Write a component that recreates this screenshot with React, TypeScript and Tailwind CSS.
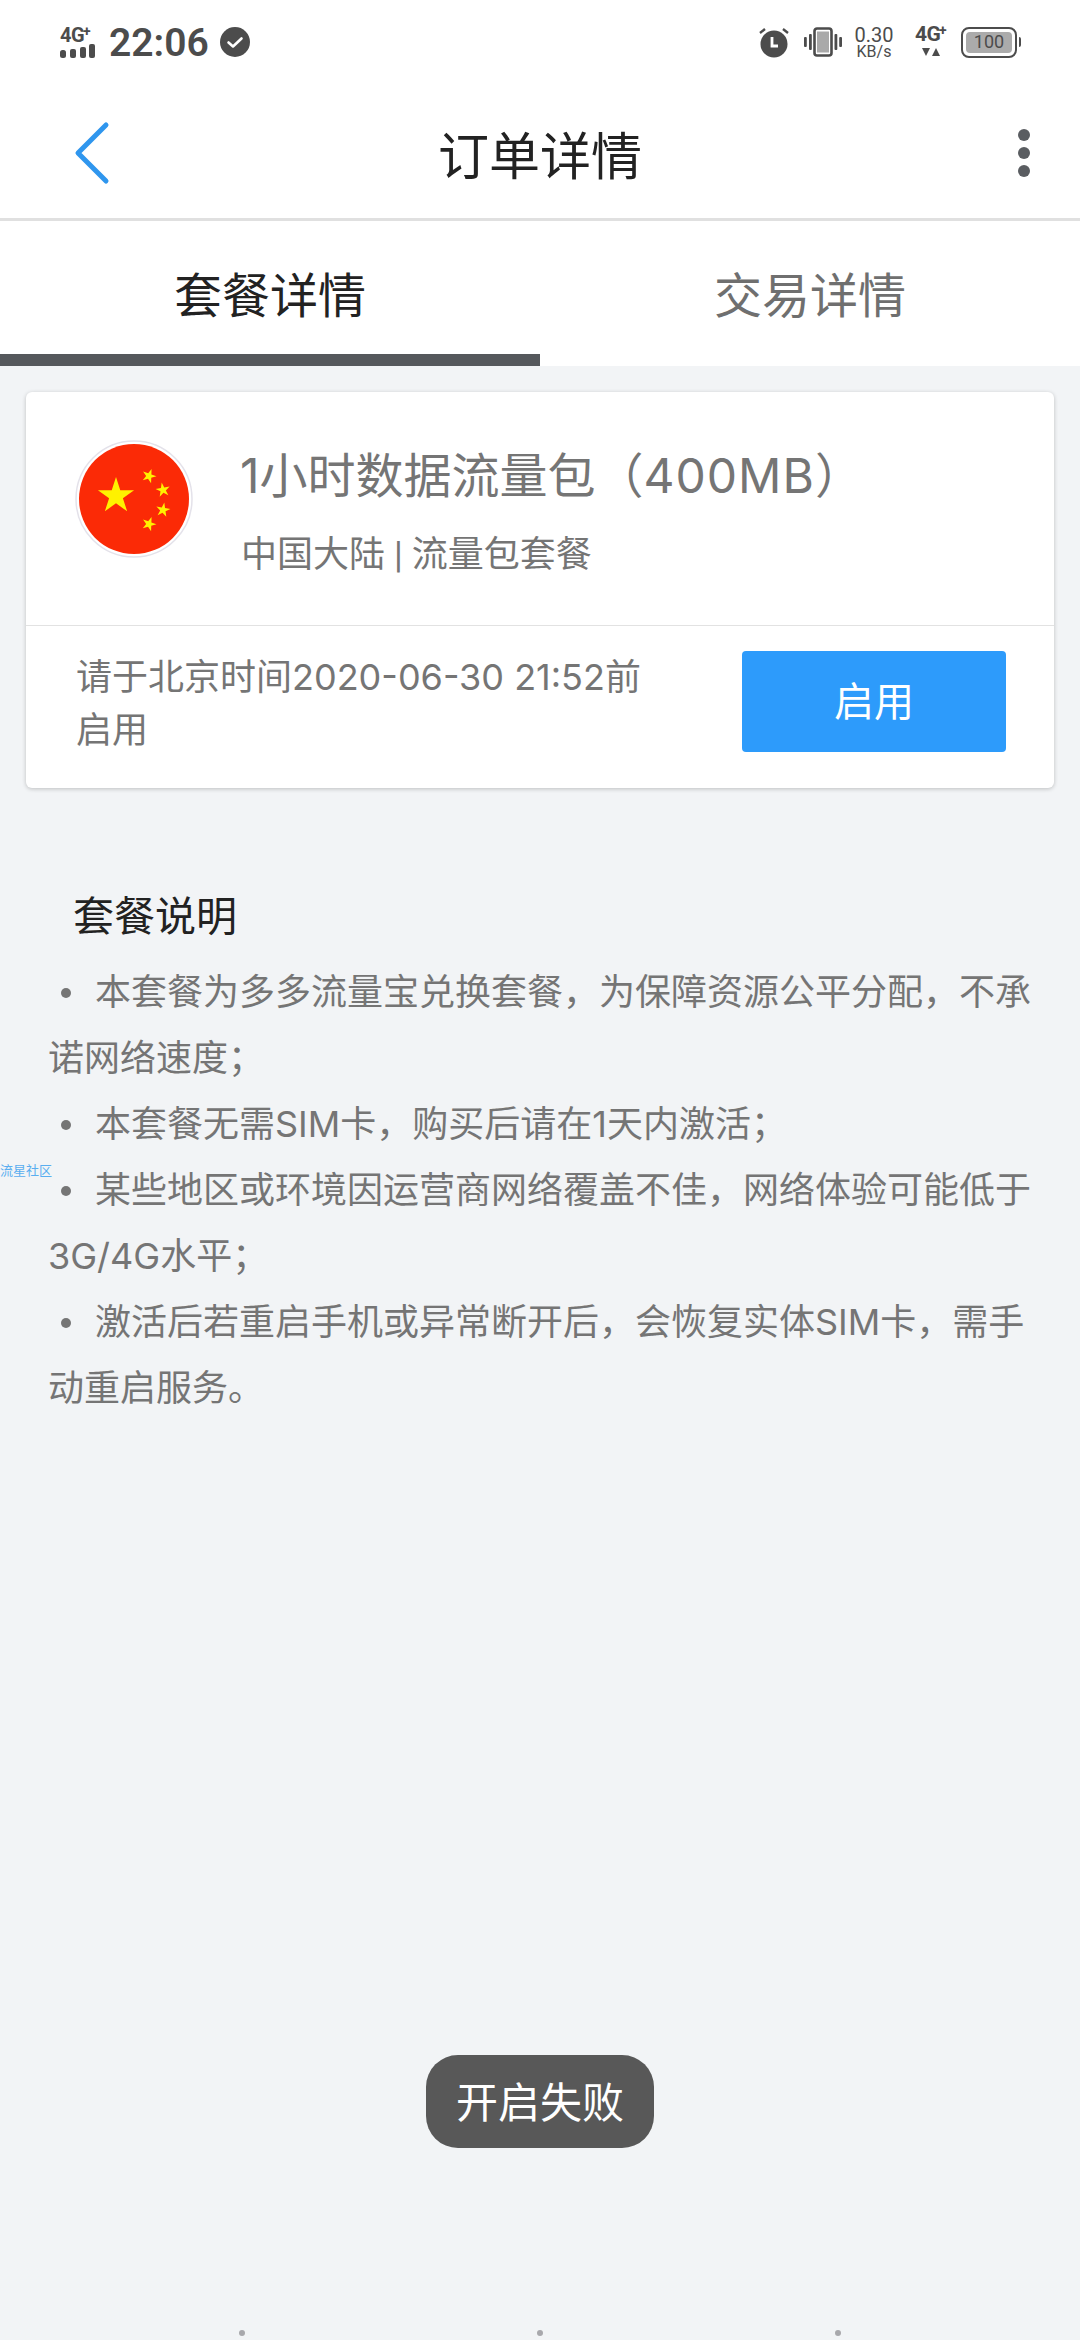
const font = { fontFamily: 'Inter, "Noto Sans CJK SC", sans-serif' };

function Star({ x, y, r, rot = 0 }: { x: number; y: number; r: number; rot?: number }) {
  const pts = Array.from({ length: 10 }, (_, i) => {
    const a = ((-90 + rot + i * 36) * Math.PI) / 180;
    const d = i % 2 === 0 ? r : r * 0.382;
    return `${x + d * Math.cos(a)},${y + d * Math.sin(a)}`;
  }).join(" ");
  return <polygon points={pts} fill="#fff200" />;
}

function Flag() {
  return (
    <svg width="118" height="118" viewBox="0 0 118 118" className="shrink-0">
      <circle cx="59" cy="59" r="58" fill="#fff" stroke="#e4e2ea" strokeWidth="1.5" />
      <circle cx="59" cy="59" r="55" fill="#fb2a06" />
      <Star x={41} y={56} r={19} />
      <Star x={74} y={36} r={7.5} rot={20} />
      <Star x={88} y={50} r={7.5} rot={-10} />
      <Star x={88} y={70} r={7.5} rot={10} />
      <Star x={74} y={84} r={7.5} rot={20} />
    </svg>
  );
}

function StatusBar() {
  return (
    <div className="h-[80px] flex items-start pt-[25px] pl-[60px] pr-[59px] justify-between text-[#4c4c4c]">
      <div className="flex items-center h-[34px]">
        <div className="relative w-[36px] h-[31px] mr-[13px]">
          <span className="absolute left-0 top-[-1px] text-[20px] leading-[18px] font-bold tracking-[-0.5px] font-['Roboto']">4G</span>
          <span className="absolute left-[23px] top-[-3px] text-[14px] leading-[14px] font-bold font-['Roboto']">+</span>
          <svg width="36" height="14" viewBox="0 0 36 14" className="absolute left-0 bottom-0">
            <rect x="0" y="6" width="6" height="8" rx="2.5" fill="#4c4c4c" />
            <rect x="10" y="5" width="6" height="9" rx="2" fill="#4c4c4c" />
            <rect x="20" y="3" width="6" height="11" rx="2" fill="#4c4c4c" />
            <rect x="29" y="0" width="6" height="14" rx="2" fill="#4c4c4c" />
          </svg>
        </div>
        <span className="text-[39px] leading-[34px] font-semibold w-[111px] mt-[2px] font-['Roboto']">22:06</span>
        <svg width="30" height="30" viewBox="0 0 30 30">
          <circle cx="15" cy="15" r="15" fill="#4c4c4c" />
          <path d="M8.5 15.5l4.500 4 8.500-8" fill="none" stroke="#fff" strokeWidth="2.600" strokeLinecap="round" strokeLinejoin="round" />
        </svg>
      </div>
      <div className="flex items-center h-[34px]">
        <svg width="30" height="32" viewBox="0 0 30 32" className="mr-[15px]">
          <circle cx="15" cy="18" r="13.500" fill="#4c4c4c" />
          <path d="M13 11v9h6" fill="none" stroke="#fff" strokeWidth="2.800" />
          <path d="M1 7l5-4M29 7l-5-4" stroke="#4c4c4c" strokeWidth="2.400" />
        </svg>
        <svg width="38" height="30" viewBox="0 0 38 30" className="mr-[13px]">
          <rect x="10.500" y="1.500" width="17" height="27" rx="2.500" fill="none" stroke="#4c4c4c" strokeWidth="2.600" />
          <rect x="13" y="4.500" width="12" height="21" fill="#a9a9a9" />
          <rect x="0" y="10" width="2.800" height="10" rx="1" fill="#4c4c4c" />
          <rect x="5" y="7" width="2.800" height="16" rx="1" fill="#4c4c4c" />
          <rect x="30.500" y="7" width="2.800" height="16" rx="1" fill="#4c4c4c" />
          <rect x="35.200" y="10" width="2.800" height="10" rx="1" fill="#4c4c4c" />
        </svg>
        <div className="w-[38px] flex flex-col items-center mr-[22px] mt-[1px] font-['Roboto']">
          <span className="text-[20px] leading-[18px]">0.30</span>
          <span className="text-[16px] leading-[15px]">KB/s</span>
        </div>
        <div className="relative w-[32px] h-[34px] flex flex-col items-center mr-[14px] font-['Roboto']">
          <span className="self-start text-[21px] leading-[19px] font-bold tracking-[-0.5px]">4G</span>
          <span className="absolute left-[24px] top-[-3px] text-[14px] leading-[16px] font-bold">+</span>
          <svg width="18" height="10" viewBox="0 0 18 10" className="mt-[3px]">
            <path d="M0 1h8L4 9zM10 9h8L14 1z" fill="#4c4c4c" />
          </svg>
        </div>
        <div className="w-[56px] h-[31px] rounded-[8px] border-[2.500px] border-[#4c4c4c] p-[3px] flex">
          <div className="flex-1 rounded-[4px] bg-[#ababab] flex items-center justify-center text-[18px] leading-none font-['Roboto']">100</div>
        </div>
        <div className="w-[2.500px] h-[10px] bg-[#4c4c4c] ml-[1.500px] rounded-r-sm" />
      </div>
    </div>
  );
}

function NavBar() {
  return (
    <div className="h-[141px] border-b-[3px] border-[#e0e0e0] relative flex items-center justify-between pl-[72px] pr-[50px] pt-[8px]">
      <svg width="38" height="64" viewBox="0 0 38 64">
        <path d="M34 4L6 32l28 28" fill="none" stroke="#2f96ee" strokeWidth="5" strokeLinecap="round" strokeLinejoin="round" />
      </svg>
      <span className="absolute inset-x-0 top-[47px] text-center text-[51px] leading-[60px] text-[#222]">订单详情</span>
      <div className="flex flex-col gap-[6px]">
        <span className="w-[12px] h-[12px] rounded-full bg-[#5a5d61]" />
        <span className="w-[12px] h-[12px] rounded-full bg-[#5a5d61]" />
        <span className="w-[12px] h-[12px] rounded-full bg-[#5a5d61]" />
      </div>
    </div>
  );
}

function Tabs() {
  return (
    <div className="flex bg-white h-[145px]">
      <div className="w-1/2 flex flex-col">
        <div className="flex-1 flex items-center justify-center text-[48px] text-[#222] pt-[16px]">套餐详情</div>
        <div className="h-[12px] bg-[#55585c]" />
      </div>
      <div className="w-1/2 flex flex-col">
        <div className="flex-1 flex items-center justify-center text-[48px] text-[#6f6f6f] pt-[16px] pb-[12px]">交易详情</div>
      </div>
    </div>
  );
}

function Card() {
  return (
    <div className="mx-[26px] mt-[26px] h-[396px] rounded-[6px] bg-white shadow-[0_1px_4px_rgba(0,0,0,0.22)] flex flex-col">
      <div className="h-[234px] border-b border-[#e2e2e2] flex items-start pl-[49px] pt-[48px]">
        <Flag />
        <div className="ml-[47px] flex flex-col mt-[6px]">
          <span className="text-[48px] leading-[60px] text-[#757575] whitespace-nowrap">
            1小时数据流量包（<span className="tracking-[1px]">400MB</span>）
          </span>
          <span className="text-[36px] leading-[44px] text-[#757575] mt-[27px] ml-[1px] font-['Roboto','Noto_Sans_CJK_SC',sans-serif]">中国大陆 | 流量包套餐</span>
        </div>
      </div>
      <div className="flex-1 flex items-center pl-[50px] pr-[48px] justify-between">
        <p className="w-[590px] text-[36px] leading-[53px] text-[#757575] mt-[-6px]">请于北京时间2020-06-30 21:52前启用</p>
        <button className="w-[264px] h-[101px] rounded-[4px] bg-[#2d9bfb] text-white text-[40px] mt-[-11px]">启用</button>
      </div>
    </div>
  );
}

function Description() {
  const items = [
    "本套餐为多多流量宝兑换套餐，为保障资源公平分配，不承诺网络速度；",
    "本套餐无需SIM卡，购买后请在1天内激活；",
    "某些地区或环境因运营商网络覆盖不佳，网络体验可能低于3G/4G水平；",
    "激活后若重启手机或异常断开后，会恢复实体SIM卡，需手动重启服务。",
  ];
  return (
    <div className="mt-[98px] pl-[48px] pr-[44px]">
      <h2 className="pl-[25px] text-[41px] leading-[60px] font-normal text-[#222]">套餐说明</h2>
      <div className="mt-[13px] text-[36px] leading-[66px] text-[#757575]">
        {items.map((t) => (
          <p key={t}>
            <span className="inline-block w-[10px] h-[10px] rounded-full bg-[#757575] ml-[13px] mr-[24px] align-[7px]" />
            {t}
          </p>
        ))}
      </div>
    </div>
  );
}

export default function App() {
  return (
    <div className="relative w-[1080px] h-[2340px] overflow-hidden bg-[#f2f4f6]" style={font}>
      <div className="bg-white">
        <StatusBar />
        <NavBar />
      </div>
      <Tabs />
      <Card />
      <Description />
      <span className="absolute left-0 top-[1162px] text-[13px] leading-[16px] text-[#5aaef0]">流星社区</span>
      <div className="absolute left-[426px] top-[2055px] w-[228px] h-[93px] rounded-[32px] bg-[#585858] flex items-center justify-center text-white text-[42px] pt-[2px]">
        开启失败
      </div>
      <span className="absolute left-[239px] top-[2330px] w-[6px] h-[6px] rounded-full bg-[#a8a8ac]" />
      <span className="absolute left-[537px] top-[2330px] w-[6px] h-[6px] rounded-full bg-[#a8a8ac]" />
      <span className="absolute left-[835px] top-[2330px] w-[6px] h-[6px] rounded-full bg-[#a8a8ac]" />
    </div>
  );
}
